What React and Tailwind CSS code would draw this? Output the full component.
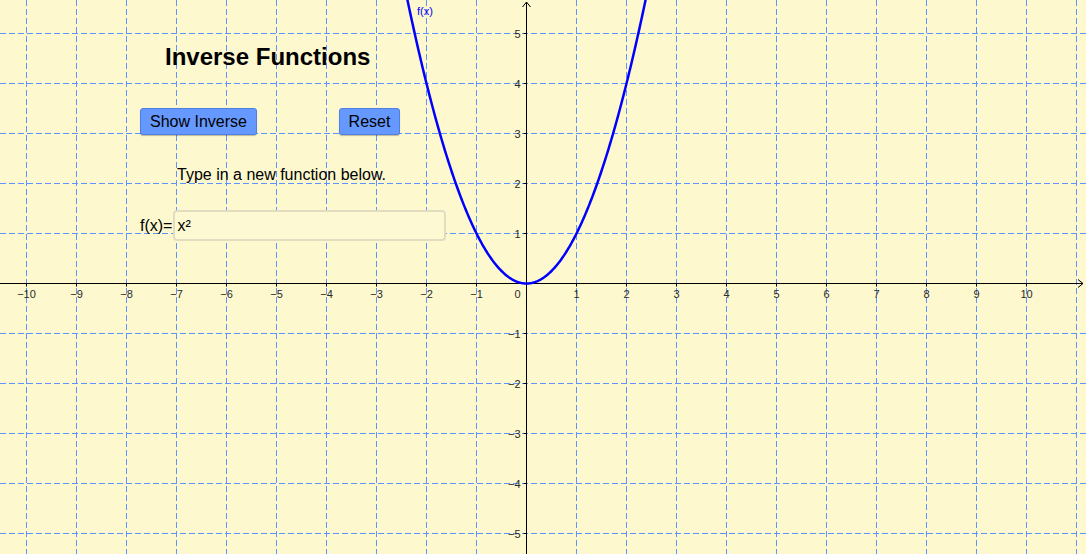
import React from 'react'

const W = 1086
const H = 554
const OX = 526.5
const OY = 283.5
const U = 50

const xs = []
for (let k = -10; k <= 11; k++) xs.push(k)
const ys = []
for (let k = -5; k <= 5; k++) ys.push(k)

const curve = () => {
  const pts = []
  for (let t = -2.7; t <= 2.7001; t += 0.02) {
    pts.push(`${(OX + t * U).toFixed(2)},${(OY - t * t * U).toFixed(2)}`)
  }
  return 'M' + pts.join(' L')
}

const label = (n) => (n < 0 ? '\u2212' + Math.abs(n) : String(n))

const Graph = () => (
  <svg
    className="absolute inset-0"
    width={W}
    height={H}
    viewBox={`0 0 ${W} ${H}`}
    style={{ fontFamily: '"Liberation Sans", Arial, sans-serif' }}
  >
    {/* grid */}
    <g fill="#5f93ff">
      {xs
        .filter((k) => k !== 0)
        .map((k) =>
          Array.from({ length: 62 }, (_, i) => (
            <rect key={'gx' + k + '-' + i} x={OX + k * U - 0.5} y={i * 9} width={1} height={6} />
          )),
        )}
      {ys
        .filter((k) => k !== 0)
        .map((k) =>
          Array.from({ length: 121 }, (_, i) => (
            <rect key={'gy' + k + '-' + i} x={i * 9} y={OY - k * U - 0.5} width={6} height={1} />
          )),
        )}
    </g>

    {/* axes */}
    <g stroke="#000" strokeWidth="1" fill="none">
      <line x1={0} y1={OY} x2={1083} y2={OY} />
      <line x1={OX} y1={2} x2={OX} y2={H} />
      <path d={`M1078 ${OY - 4} L1083 ${OY} L1078 ${OY + 4}`} />
      <path d={`M${OX - 4} 7 L${OX} 2 L${OX + 4} 7`} />
    </g>

    {/* ticks */}
    <g stroke="#000" strokeWidth="1">
      {xs
        .filter((k) => k !== 0 && k < 11)
        .map((k) => (
          <line key={'tx' + k} x1={OX + k * U} y1={OY} x2={OX + k * U} y2={OY + 3} />
        ))}
      {ys
        .filter((k) => k !== 0)
        .map((k) => (
          <line key={'ty' + k} x1={OX - 3} y1={OY - k * U} x2={OX} y2={OY - k * U} />
        ))}
    </g>

    {/* labels */}
    <g fill="#2a2a2a" fontSize="11">
      {xs
        .filter((k) => k !== 0 && k < 11)
        .map((k) => (
          <text key={'lx' + k} x={OX + k * U} y={OY + 14} textAnchor="middle">
            {label(k)}
          </text>
        ))}
      <text x={OX - 9} y={OY + 14} textAnchor="middle">
        0
      </text>
      {ys
        .filter((k) => k !== 0)
        .map((k) => (
          <text key={'ly' + k} x={OX - 6} y={OY - k * U + 4} textAnchor="end">
            {label(k)}
          </text>
        ))}
    </g>

    {/* f(x) */}
    <path d={curve()} stroke="#0000ff" strokeWidth="2.5" fill="none" />
    <text x={417} y={15} fill="#0000ff" fontSize="11">
      f(x)
    </text>
  </svg>
)

export default function App() {
  return (
    <div
      className="relative w-[1086px] h-[554px] overflow-hidden bg-[#fdf8ce] text-black"
      style={{ fontFamily: '"Liberation Sans", Arial, sans-serif' }}
    >
      <Graph />

      <h1 className="absolute left-[165px] top-[42px] text-[24px] leading-[30px] font-bold">
        Inverse Functions
      </h1>

      <button className="absolute left-[140px] top-[108px] w-[117px] h-[27px] rounded-[3px] border border-[#4f7fe0] bg-[#6699ff] text-[16px] leading-none shadow-[0_1px_1px_rgba(0,0,0,0.25)]">
        Show Inverse
      </button>
      <button className="absolute left-[339px] top-[108px] w-[61px] h-[27px] rounded-[3px] border border-[#4f7fe0] bg-[#6699ff] text-[16px] leading-none shadow-[0_1px_1px_rgba(0,0,0,0.25)]">
        Reset
      </button>

      <p className="absolute left-[177px] top-[165px] text-[16px] leading-[20px]">
        Type in a new function below.
      </p>

      <div className="absolute left-[140px] top-[210px] flex items-center h-[31px]">
        <span className="text-[16px] leading-none pr-[1px]">f(x)=</span>
        <div className="flex items-center w-[273px] h-[31px] rounded-[4px] border-2 border-[#e2ddc0] bg-[#fdf9d2] pl-[2px] text-[16px]">
          x²
        </div>
      </div>
    </div>
  )
}
